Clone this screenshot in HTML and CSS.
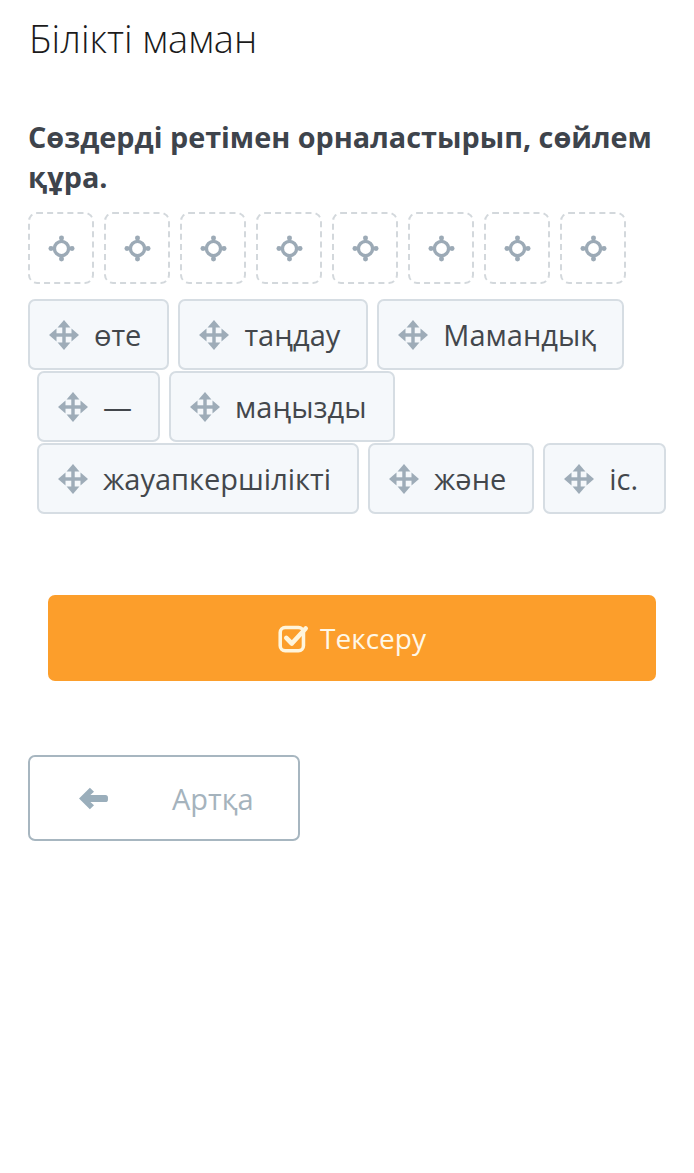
FILE: index.html
```html
<!DOCTYPE html>
<html lang="kk">
<head>
<meta charset="utf-8">
<title>Білікті маман</title>
<link rel="stylesheet" href="styles.css">
</head>
<body>
<svg width="0" height="0" class="defs">
  <defs>
    <symbol id="target" viewBox="0 0 24 24">
      <circle cx="12" cy="12" r="6.3" fill="none" stroke="currentColor" stroke-width="3"/>
      <rect x="10.5" y="1.5" width="3" height="5" rx="1"/>
      <rect x="10.5" y="17.5" width="3" height="5" rx="1"/>
      <rect x="1.5" y="10.5" width="5" height="3" rx="1"/>
      <rect x="17.5" y="10.5" width="5" height="3" rx="1"/>
      <circle cx="12" cy="2.6" r="2.2"/>
      <circle cx="12" cy="21.4" r="2.2"/>
      <circle cx="2.6" cy="12" r="2.2"/>
      <circle cx="21.4" cy="12" r="2.2"/>
    </symbol>
    <symbol id="move" viewBox="0 0 28 28">
      <rect x="12.4" y="5" width="3.2" height="18"/>
      <rect x="5" y="12.4" width="18" height="3.2"/>
      <path d="M14 0 L20 7 H8 Z"/>
      <path d="M14 28 L20 21 H8 Z"/>
      <path d="M0 14 L7 8 V20 Z"/>
      <path d="M28 14 L21 8 V20 Z"/>
    </symbol>
  </defs>
</svg>
<main class="page">
  <h1 class="title">Білікті маман</h1>
  <h2 class="task">Сөздерді ретімен орналастырып, сөйлем құра.</h2>

  <div class="slots">
    <div class="slot"><svg class="target"><use href="#target"/></svg></div>
    <div class="slot"><svg class="target"><use href="#target"/></svg></div>
    <div class="slot"><svg class="target"><use href="#target"/></svg></div>
    <div class="slot"><svg class="target"><use href="#target"/></svg></div>
    <div class="slot"><svg class="target"><use href="#target"/></svg></div>
    <div class="slot"><svg class="target"><use href="#target"/></svg></div>
    <div class="slot"><svg class="target"><use href="#target"/></svg></div>
    <div class="slot"><svg class="target"><use href="#target"/></svg></div>
  </div>

  <div class="words">
    <div class="row">
      <div class="chip"><svg class="move"><use href="#move"/></svg><span>өте</span></div>
      <div class="chip"><svg class="move"><use href="#move"/></svg><span>таңдау</span></div>
      <div class="chip"><svg class="move"><use href="#move"/></svg><span>Мамандық</span></div>
    </div>
    <div class="row indent">
      <div class="chip"><svg class="move"><use href="#move"/></svg><span>—</span></div>
      <div class="chip"><svg class="move"><use href="#move"/></svg><span>маңызды</span></div>
    </div>
    <div class="row indent">
      <div class="chip"><svg class="move"><use href="#move"/></svg><span>жауапкершілікті</span></div>
      <div class="chip"><svg class="move"><use href="#move"/></svg><span>және</span></div>
      <div class="chip"><svg class="move"><use href="#move"/></svg><span>іс.</span></div>
    </div>
  </div>

  <div class="check-wrap">
    <button class="btn-check" type="button">
      <svg class="check-icon" viewBox="0 0 28 28">
        <rect x="2" y="4" width="21" height="21" rx="4.5" fill="none" stroke="currentColor" stroke-width="3.2"/>
        <path d="M7.5 13.5 L12.5 18.5 L25 5" fill="none" stroke="currentColor" stroke-width="4.2" stroke-linecap="round" stroke-linejoin="round"/>
      </svg>
      <span>Тексеру</span>
    </button>
  </div>

  <button class="btn-back" type="button">
    <svg class="back-icon" viewBox="0 0 30 24">
      <path d="M1 12 L11.5 1.5 L15.5 5.5 L12 8.5 H26.5 Q29 8.5 29 11 V13 Q29 15.5 26.5 15.5 H12 L15.5 18.5 L11.5 22.5 Z"/>
    </svg>
    <span>Артқа</span>
  </button>
</main>
</body>
</html>
```

FILE: styles.css
```css
* { box-sizing: border-box; }

html, body {
  margin: 0;
  padding: 0;
  background: #ffffff;
}

body {
  font-family: "Open Sans", "Noto Sans", "DejaVu Sans", sans-serif;
  color: #3d434a;
}

.defs {
  position: absolute;
  width: 0;
  height: 0;
  overflow: hidden;
}

.page {
  padding: 0 28px;
}

.title {
  margin: 0;
  padding: 12px 0 0 1px;
  font-size: 38px;
  font-weight: 300;
  line-height: 52px;
  color: #1b1b1b;
}

.task {
  margin: 53px 0 0 0;
  font-size: 28.8px;
  font-weight: 700;
  line-height: 40px;
  color: #3e444c;
}

.slots {
  display: flex;
  gap: 10px;
  margin-top: 15px;
}

.slot {
  width: 66px;
  height: 72px;
  border: 2px dashed #d3d8dc;
  border-radius: 9px;
  display: flex;
  align-items: center;
  justify-content: center;
}

.target {
  width: 27px;
  height: 27px;
  fill: #9caab6;
  color: #9caab6;
}

.words {
  margin-top: 15px;
  display: flex;
  flex-direction: column;
  gap: 1px;
}

.row {
  display: flex;
  gap: 9px;
}

.row.indent {
  padding-left: 9px;
}

.chip {
  height: 71px;
  display: flex;
  align-items: center;
  gap: 15px;
  padding: 0 26px 0 19px;
  background: #f5f8fb;
  border: 2px solid #d6dde3;
  border-radius: 7px;
  font-size: 29px;
  color: #43474c;
}

.move {
  width: 30px;
  height: 30px;
  fill: #9eacb8;
  flex: none;
}

.check-wrap {
  padding: 81px 10px 0 20px;
}

.btn-check {
  width: 100%;
  height: 86px;
  border: none;
  border-radius: 7px;
  background: #fc9e2b;
  color: #fff8e8;
  font-family: inherit;
  font-size: 28px;
  display: flex;
  align-items: center;
  justify-content: center;
  gap: 11px;
  padding: 0;
}

.check-icon {
  width: 31px;
  height: 31px;
  color: #fff5dc;
}

.btn-back {
  margin-top: 74px;
  width: 272px;
  height: 86px;
  border: 2px solid #a7b6c0;
  border-radius: 7px;
  background: #ffffff;
  font-family: inherit;
  font-size: 29px;
  color: #a5b3bd;
  display: flex;
  align-items: center;
  padding: 0 0 0 48px;
  gap: 63px;
}

.back-icon {
  width: 31px;
  height: 25px;
  fill: #9aaebb;
}
```
